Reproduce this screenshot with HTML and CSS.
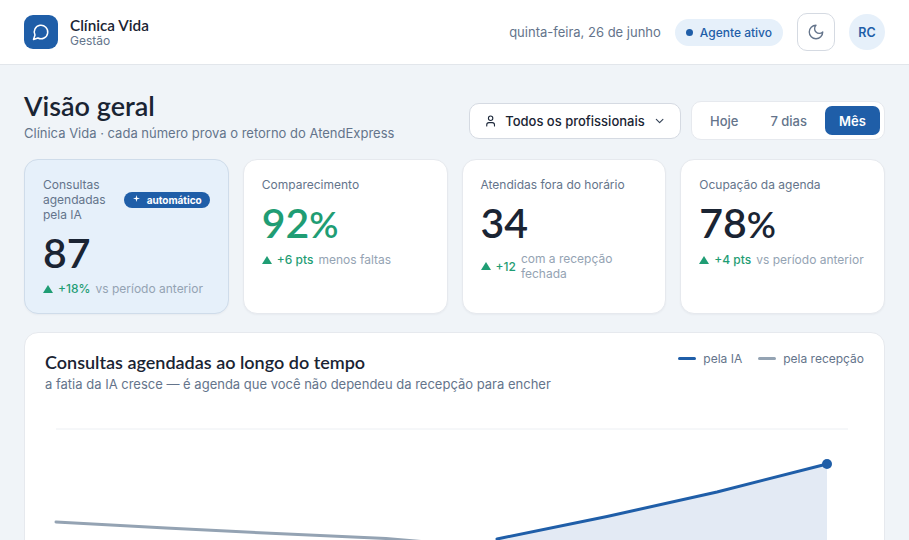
FILE: index.html
```html
<!DOCTYPE html>
<html lang="pt-BR">
<head>
    <meta charset="UTF-8">
    <meta name="viewport" content="width=device-width, initial-scale=1.0">
    <title>Visão geral - Clínica Vida</title>
    <link rel="stylesheet" href="styles.css">
</head>
<body>
    <header class="topbar">
        <div class="brand">
            <div class="brand-icon">
                <svg width="18" height="18" viewBox="0 0 24 24" fill="none" stroke="#fff" stroke-width="2" stroke-linecap="round" stroke-linejoin="round">
                    <path d="M7.9 20A9 9 0 1 0 4 16.1L2 22Z"/>
                </svg>
            </div>
            <div>
                <div class="brand-name">Clínica Vida</div>
                <div class="brand-sub">Gestão</div>
            </div>
        </div>
        <div class="top-actions">
            <span class="date">quinta-feira, 26 de junho</span>
            <span class="agent-pill"><i class="dot"></i>Agente ativo</span>
            <button class="theme-btn">
                <svg width="18" height="18" viewBox="0 0 24 24" fill="none" stroke="#64748b" stroke-width="1.8" stroke-linecap="round" stroke-linejoin="round">
                    <path d="M12 3a6 6 0 0 0 9 9 9 9 0 1 1-9-9Z"/>
                </svg>
            </button>
            <div class="avatar">RC</div>
        </div>
    </header>

    <main class="content">
        <section class="page-head">
            <div>
                <h1>Visão geral</h1>
                <p class="page-sub">Clínica Vida · cada número prova o retorno do AtendExpress</p>
            </div>
            <div class="filters">
                <button class="select-btn">
                    <svg width="14" height="14" viewBox="0 0 24 24" fill="none" stroke="#1e293b" stroke-width="2" stroke-linecap="round" stroke-linejoin="round">
                        <path d="M19 21v-2a4 4 0 0 0-4-4H9a4 4 0 0 0-4 4v2"/>
                        <circle cx="12" cy="7" r="4"/>
                    </svg>
                    <span>Todos os profissionais</span>
                    <svg width="14" height="14" viewBox="0 0 24 24" fill="none" stroke="#334155" stroke-width="2" stroke-linecap="round" stroke-linejoin="round">
                        <path d="m6 9 6 6 6-6"/>
                    </svg>
                </button>
                <div class="segmented">
                    <button class="seg">Hoje</button>
                    <button class="seg">7 dias</button>
                    <button class="seg active">Mês</button>
                </div>
            </div>
        </section>

        <section class="stats">
            <div class="stat highlight">
                <div class="stat-top">
                    <span class="stat-label">Consultas agendadas pela IA</span>
                    <span class="auto-badge">
                        <svg class="spark" width="7" height="7" viewBox="0 0 8 8" fill="#fff">
                            <path d="M4 0 L4.8 3.2 L8 4 L4.8 4.8 L4 8 L3.2 4.8 L0 4 L3.2 3.2 Z"/>
                        </svg>
                        automático
                    </span>
                </div>
                <div class="stat-value">87</div>
                <div class="stat-delta"><i class="arrow"></i><b>+18%</b><span>vs período anterior</span></div>
            </div>
            <div class="stat">
                <div class="stat-top"><span class="stat-label">Comparecimento</span></div>
                <div class="stat-value green">92<span class="pct">%</span></div>
                <div class="stat-delta"><i class="arrow"></i><b>+6 pts</b><span>menos faltas</span></div>
            </div>
            <div class="stat">
                <div class="stat-top"><span class="stat-label">Atendidas fora do horário</span></div>
                <div class="stat-value">34</div>
                <div class="stat-delta"><i class="arrow"></i><b>+12</b><span>com a recepção fechada</span></div>
            </div>
            <div class="stat">
                <div class="stat-top"><span class="stat-label">Ocupação da agenda</span></div>
                <div class="stat-value">78<span class="pct">%</span></div>
                <div class="stat-delta"><i class="arrow"></i><b>+4 pts</b><span>vs período anterior</span></div>
            </div>
        </section>

        <section class="chart-card">
            <div class="chart-head">
                <div>
                    <h2>Consultas agendadas ao longo do tempo</h2>
                    <p class="chart-sub">a fatia da IA cresce — é agenda que você não dependeu da recepção para encher</p>
                </div>
                <div class="legend">
                    <span class="legend-item"><i class="swatch blue"></i>pela IA</span>
                    <span class="legend-item"><i class="swatch gray"></i>pela recepção</span>
                </div>
            </div>
            <svg class="chart" width="820" height="240" viewBox="0 0 820 240">
                <line x1="10" y1="16" x2="802" y2="16" stroke="#eceff3" stroke-width="1"/>
                <path d="M451 126 L561 103.5 L671 79 L781 51 L781 240 L451 240 Z" fill="#e3eaf4"/>
                <polyline points="10,109 120,115 230,120.5 340,125.5 451,135" fill="none" stroke="#94a3b3" stroke-width="3" stroke-linecap="round"/>
                <polyline points="451,126 561,103.5 671,79 781,51" fill="none" stroke="#1f5ea8" stroke-width="3" stroke-linecap="round"/>
                <circle cx="781" cy="51" r="5" fill="#1f5ea8"/>
            </svg>
        </section>
    </main>
</body>
</html>
```

FILE: styles.css
```css
* {
    box-sizing: border-box;
    margin: 0;
    padding: 0;
}

html, body {
    height: 100vh;
    overflow: hidden;
}

body {
    font-family: 'Inter', sans-serif;
    background-color: #f0f4f8;
    color: #1a2433;
}

button {
    font-family: inherit;
    cursor: pointer;
}

.topbar {
    display: flex;
    justify-content: space-between;
    align-items: center;
    height: 65px;
    padding: 0 24px;
    background-color: #fff;
    border-bottom: 1px solid #e2e6eb;
}

.brand {
    display: flex;
    align-items: center;
    gap: 12px;
}

.brand-icon {
    display: flex;
    justify-content: center;
    align-items: center;
    width: 34px;
    height: 34px;
    border-radius: 9px;
    background-color: #1f5ea8;
}

.brand-name {
    font-family: 'Lato', sans-serif;
    font-size: 15.3px;
    font-weight: 600;
    line-height: 18px;
}

.brand-sub {
    font-size: 12px;
    line-height: 14px;
    color: #64748b;
}

.top-actions {
    display: flex;
    align-items: center;
}

.date {
    font-size: 13px;
    color: #64748b;
    margin-right: 14px;
}

.agent-pill {
    display: flex;
    align-items: center;
    gap: 7px;
    height: 27px;
    padding: 0 11px;
    border-radius: 14px;
    background-color: #e6f0fa;
    color: #1f5ea8;
    font-size: 12px;
    font-weight: 500;
    margin-right: 14px;
}

.dot {
    width: 7px;
    height: 7px;
    border-radius: 50%;
    background-color: #1f5ea8;
}

.theme-btn {
    display: flex;
    justify-content: center;
    align-items: center;
    width: 38px;
    height: 38px;
    border: 1px solid #d5dae2;
    border-radius: 10px;
    background: #fff;
    margin-right: 14px;
}

.avatar {
    display: flex;
    justify-content: center;
    align-items: center;
    width: 36px;
    height: 36px;
    border-radius: 50%;
    background-color: #e6f0fa;
    color: #1f5ea8;
    font-size: 12.5px;
    font-weight: 600;
}

.content {
    padding: 24px 24px 0;
}

.page-head {
    display: flex;
    justify-content: space-between;
    align-items: flex-start;
    height: 70px;
}

h1 {
    font-family: 'Lato', sans-serif;
    font-size: 27px;
    font-weight: 600;
    line-height: 34px;
}

.page-sub {
    font-size: 13px;
    line-height: 18px;
    margin-top: 1px;
    color: #64748b;
}

.filters {
    display: flex;
    align-items: center;
    gap: 10px;
    margin-top: 12px;
}

.select-btn {
    display: flex;
    align-items: center;
    gap: 8px;
    width: 212px;
    height: 36px;
    padding: 0 14px;
    border: 1px solid #d5dae2;
    border-radius: 10px;
    background: #fff;
    color: #1a2433;
    font-size: 13px;
    font-weight: 500;
}

.select-btn span {
    flex: 1;
    text-align: left;
    white-space: nowrap;
}

.segmented {
    display: flex;
    gap: 4px;
    height: 39px;
    padding: 4px;
    border: 1px solid #e6e9ee;
    border-radius: 10px;
    background: #fff;
}

.seg {
    padding: 0 14px;
    border: none;
    border-radius: 7px;
    background: none;
    color: #64748b;
    font-size: 13px;
    font-weight: 500;
}

.seg.active {
    width: 55px;
    padding: 0;
    background-color: #1f5ea8;
    color: #fff;
    font-weight: 600;
}

.stats {
    display: grid;
    grid-template-columns: repeat(4, 1fr);
    gap: 14px;
}

.stat {
    height: 155px;
    padding: 17px 18px;
    border: 1px solid #e6e9ee;
    border-radius: 14px;
    background: #fff;
    box-shadow: 0 1px 2px rgba(20, 30, 50, 0.04);
}

.stat.highlight {
    background-color: #e6f0fa;
    border-color: #cfdcea;
}

.stat-top {
    display: flex;
    align-items: center;
    justify-content: space-between;
    gap: 12px;
}

.stat-label {
    font-size: 12px;
    line-height: 15px;
    color: #64748b;
}

.auto-badge {
    display: flex;
    align-items: center;
    gap: 7px;
    flex-shrink: 0;
    height: 16px;
    padding: 0 8px 0 9px;
    border-radius: 8px;
    background-color: #1f5ea8;
    color: #fff;
    font-size: 10px;
    font-weight: 700;
}

.spark {
    margin-top: -3px;
}

.stat-value {
    font-family: 'Lato', sans-serif;
    font-size: 41px;
    font-weight: 600;
    line-height: 48px;
    margin-top: 7px;
}

.stat-value.green {
    color: #1f9d74;
}

.pct {
    font-size: 36px;
}

.stat-delta {
    display: flex;
    align-items: center;
    gap: 5px;
    font-size: 12px;
    line-height: 15px;
    margin-top: 4px;
    color: #94a3b3;
}

.stat-delta b {
    color: #1f9d74;
    font-weight: 500;
    white-space: nowrap;
}

.arrow {
    flex-shrink: 0;
    width: 0;
    height: 0;
    border-left: 5px solid transparent;
    border-right: 5px solid transparent;
    border-bottom: 8px solid #1f9d74;
}

.chart-card {
    margin-top: 18px;
    height: 300px;
    padding: 19px 20px 0;
    border: 1px solid #e6e9ee;
    border-radius: 14px;
    background: #fff;
}

.chart-head {
    display: flex;
    justify-content: space-between;
    align-items: flex-start;
}

h2 {
    font-family: 'Lato', sans-serif;
    font-size: 18px;
    font-weight: 600;
    line-height: 20px;
}

.chart-sub {
    font-size: 13px;
    line-height: 15px;
    margin-top: 5px;
    color: #64748b;
}

.legend {
    display: flex;
    gap: 16px;
    margin-top: -1px;
    font-size: 12px;
    color: #64748b;
}

.legend-item {
    display: flex;
    align-items: center;
    gap: 7px;
}

.swatch {
    width: 18px;
    height: 3px;
    border-radius: 2px;
}

.swatch.blue {
    background-color: #1f5ea8;
}

.swatch.gray {
    background-color: #94a3b3;
}

.chart {
    display: block;
    margin-top: 21px;
    margin-left: 1px;
}
```
